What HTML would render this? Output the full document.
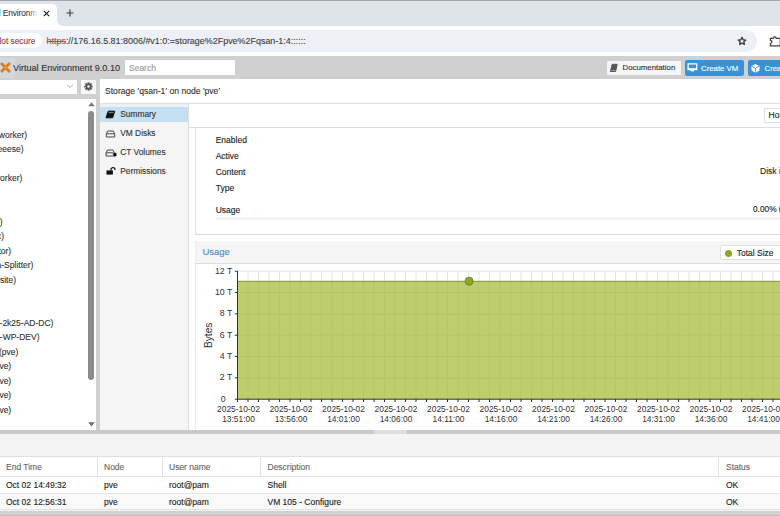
<!DOCTYPE html>
<html><head><meta charset="utf-8">
<style>
*{box-sizing:border-box;margin:0;padding:0}
html,body{-webkit-text-stroke:0.12px currentColor;width:780px;height:516px;overflow:hidden;background:#fff;font-family:"Liberation Sans",sans-serif;font-size:8.5px;color:#222;position:relative}
.a{position:absolute;white-space:nowrap}
.t{line-height:10px;height:10px}
</style></head><body>
<!-- browser chrome -->
<div class="a" style="left:0;top:0;width:780px;height:25.5px;background:#dfe3ea"></div>
<div class="a" style="left:0;top:0;width:780px;height:1px;background:#a4a8ae"></div>
<div class="a" style="left:0;top:4px;width:57px;height:23px;background:#fff;border-top-right-radius:5px"></div>
<div class="a t" style="left:-1.2px;top:8px;font-size:8.3px;color:#3c4043;line-height:10px;letter-spacing:-0.1px">l Environm</div>
<div class="a" style="left:28px;top:6px;width:12px;height:14px;background:linear-gradient(90deg,rgba(255,255,255,0),#fff 85%)"></div>
<svg class="a" style="left:43px;top:9.5px" width="7" height="7" viewBox="0 0 7 7"><path d="M0.8 0.8l5.4 5.4M6.2 0.8l-5.4 5.4" stroke="#202124" stroke-width="1.2"/></svg>
<svg class="a" style="left:66px;top:9px" width="8" height="8" viewBox="0 0 8 8"><path d="M4 0.5v7M0.5 4h7" stroke="#3c4043" stroke-width="1.2"/></svg>
<div class="a" style="left:0;top:25.5px;width:780px;height:31px;background:#fff"></div>
<div class="a" style="left:57px;top:20px;width:8px;height:6px;background:#fff"></div>
<div class="a" style="left:57px;top:13.5px;width:12px;height:12px;background:#dfe3ea;border-bottom-left-radius:6px"></div>

<div class="a" style="left:-20px;top:30px;width:777px;height:22px;background:#edf0f6;border-radius:11px"></div>
<div class="a" style="left:-20px;top:33.3px;width:61.5px;height:15px;background:#fff;border-radius:7.5px"></div>
<div class="a t" style="left:-0.5px;top:36px;font-size:8.3px;color:#9a4644;-webkit-text-stroke:0.15px #9a4644">lot secure</div>
<div class="a t" style="left:46.5px;top:36.3px;font-size:8.95px;color:#3c4043"><span style="color:#a8504c;text-decoration:line-through">https</span>://176.16.5.81:8006/#v1:0:=storage%2Fpve%2Fqsan-1:4::::::</div>
<svg class="a" style="left:736px;top:35px" width="12" height="12" viewBox="0 0 12 12"><path d="M6 2.3l1.15 2.45 2.65.3-1.95 1.8.55 2.6L6 8.15 3.6 9.45l.55-2.6L2.2 5.05l2.65-.3z" fill="none" stroke="#3c4043" stroke-width="1.35" stroke-linejoin="round"/></svg>
<svg class="a" style="left:769px;top:34px" width="14" height="14" viewBox="0 0 14 14"><path d="M1.4 4.3h2.9a1.4 1.4 0 0 1 2.8 0h4.2v7.6H1.4V9.3a1.5 1.5 0 0 0 0-3z" fill="none" stroke="#3c4043" stroke-width="1.3" stroke-linejoin="round"/></svg>

<!-- PVE background -->
<div class="a" style="left:0;top:56.4px;width:780px;height:460px;background:#d0d0d0"></div>
<!-- logo -->
<div class="a" style="left:0;top:58px;width:15px;height:20px;background:#d3d8de"></div>
<svg class="a" style="left:-1.1px;top:61.4px" width="14" height="13" viewBox="0 0 14 13"><path d="M2 2Q4.7 4.6 6.4 6.5Q4.7 8.4 2 11M11 2Q8.3 4.6 6.6 6.5Q8.3 8.4 11 11" fill="none" stroke="#e37a1e" stroke-width="2.8"/><circle cx="6.5" cy="6.5" r="1.2" fill="#f2a24e"/></svg>
<div class="a t" style="left:13px;top:63px;font-size:9.1px;color:#333">Virtual Environment 9.0.10</div>
<div class="a" style="left:124.5px;top:60px;width:110px;height:15.3px;background:#fff"></div>
<div class="a t" style="left:129px;top:63px;font-size:8.5px;color:#9a9a9a">Search</div>
<!-- header buttons -->
<div class="a" style="left:606.9px;top:61px;width:73.8px;height:13.8px;background:#f6f6f6;border-radius:1px"></div>
<svg class="a" style="left:609px;top:63px" width="10" height="10" viewBox="0 0 10 10"><path d="M3.2 1.3h5l-1.6 7.2H1.4z" fill="#555" stroke="#555" stroke-width="1" stroke-linejoin="round"/><path d="M1.9 7.6h4.6" stroke="#bbb" stroke-width=".7"/></svg>
<div class="a t" style="left:622.5px;top:63px;font-size:7.85px;color:#333">Documentation</div>
<div class="a" style="left:684.5px;top:60.1px;width:59.3px;height:15.6px;background:#3892d4;border-radius:2px"></div>
<svg class="a" style="left:687px;top:63px" width="11" height="10" viewBox="0 0 11 10"><path d="M1.1 0.9h8.6v5.6H1.1z" fill="none" stroke="#fff" stroke-width="1.3"/><path d="M1.1 6.1h8.6" stroke="#fff" stroke-width="1.7"/><rect x="3.6" y="6.8" width="3.4" height="1.6" fill="#fff"/></svg>
<div class="a t" style="left:701px;top:63.5px;font-size:7.8px;color:#fff">Create VM</div>
<div class="a" style="left:748px;top:60.1px;width:40px;height:15.6px;background:#3892d4;border-radius:2px"></div>
<svg class="a" style="left:750px;top:62.8px" width="11" height="11" viewBox="0 0 11 11"><path d="M5.5 1l4 2v4.6l-4 2.2-4-2.2V3z" fill="#fff"/><path d="M1.8 3.2l3.7 2 3.7-2M5.5 5.2v4.4" stroke="#3892d4" stroke-width=".8" fill="none"/></svg>
<div class="a t" style="left:764.5px;top:63.5px;font-size:7.8px;color:#fff">Create CT</div>

<!-- left panel -->
<div class="a" style="left:0;top:79.7px;width:77px;height:14.3px;background:#fff"></div>
<svg class="a" style="left:66px;top:83.3px" width="8" height="6" viewBox="0 0 8 6"><path d="M1 1.5l3 3 3-3" fill="none" stroke="#999" stroke-width=".9"/></svg>
<div class="a" style="left:81.3px;top:79.7px;width:14.7px;height:14.5px;background:#f8f8f8"></div>
<svg class="a" style="left:84.2px;top:82.2px" width="9" height="9" viewBox="0 0 10 10"><g fill="#555"><circle cx="5" cy="5" r="3.2"/><rect x="4" y="0.3" width="2" height="9.4"/><rect x="0.3" y="4" width="9.4" height="2"/><rect x="4" y="0.3" width="2" height="9.4" transform="rotate(45 5 5)"/><rect x="4" y="0.3" width="2" height="9.4" transform="rotate(-45 5 5)"/></g><circle cx="5" cy="5" r="1.3" fill="#f8f8f8"/></svg>
<div class="a" style="left:0;top:98.7px;width:96.3px;height:331.3px;background:#fff"></div>
<div class="a" style="left:88px;top:111px;width:5.9px;height:268.5px;background:#8c8c8c;border-radius:3px"></div>
<svg class="a" style="left:87.7px;top:102.2px" width="7" height="5" viewBox="0 0 7 5"><path d="M0.3 4.3h6.4L3.5 0.3z" fill="#777"/></svg>
<svg class="a" style="left:87.7px;top:422.2px" width="7" height="5" viewBox="0 0 7 5"><path d="M0.2 0.2h6.6L3.5 4.6z" fill="#6f6f6f"/></svg>
<div id="tree" style="font-size:8.5px;color:#333">
<div class="a t" style="right:752.8px;top:129.97px">worker)</div>
<div class="a t" style="right:756.5px;top:144.43px">eeese)</div>
<div class="a t" style="right:757.7px;top:173.35px">worker)</div>
<div class="a t" style="right:777.5px;top:216.74px">)</div>
<div class="a t" style="right:776px;top:231.20px">c)</div>
<div class="a t" style="right:768.8px;top:245.66px">tor)</div>
<div class="a t" style="right:746.6px;top:260.12px">a-Splitter)</div>
<div class="a t" style="right:764px;top:274.58px">site)</div>
<div class="a t" style="right:726.6px;top:317.96px">-2k25-AD-DC)</div>
<div class="a t" style="right:740.5px;top:332.42px">-WP-DEV)</div>
<div class="a t" style="right:761.7px;top:346.88px">(pve)</div>
<div class="a t" style="right:768.8px;top:361.35px">ve)</div>
<div class="a t" style="right:768.8px;top:375.81px">ve)</div>
<div class="a t" style="right:768.8px;top:390.27px">ve)</div>
<div class="a t" style="right:768.8px;top:404.73px">ve)</div>
</div>

<!-- content title -->
<div class="a" style="left:99.7px;top:79.2px;width:681px;height:24px;background:#fff"></div>
<div class="a t" style="left:105px;top:85.9px;font-size:8.6px;color:#333">Storage 'qsan-1' on node 'pve'</div>
<!-- nav -->
<div class="a" style="left:99.7px;top:103px;width:89.5px;height:327px;background:#f5f5f5;border-top:1px solid #e0e0e0;border-right:1px solid #dddddd"></div>
<div class="a" style="left:99.7px;top:104px;width:88.5px;height:2.5px;background:#eaf1f7"></div><div class="a" style="left:99.7px;top:106.5px;width:88.5px;height:15.2px;background:#c5dff3"></div>
<svg class="a" style="left:105px;top:110px" width="11" height="9" viewBox="0 0 11 9"><path d="M3.2 1.2h6.6l-2.2 6.6H1z" fill="#111" stroke="#111" stroke-width="1" stroke-linejoin="round"/><path d="M3.6 2.6h5" stroke="#c5dff3" stroke-width=".6"/></svg>
<div class="a t" style="left:120.2px;top:109.3px;font-size:8.4px;color:#333">Summary</div>
<svg class="a" style="left:105px;top:129.5px" width="11" height="8" viewBox="0 0 11 8"><path d="M1.3 3.8L2.8 1h5.4l1.5 2.8v3.2H1.3z M1.3 3.8h8.4" fill="none" stroke="#444" stroke-width="1"/></svg>
<div class="a t" style="left:120.2px;top:127.7px;font-size:8.4px;color:#333">VM Disks</div>
<svg class="a" style="left:105px;top:148.5px" width="12" height="9" viewBox="0 0 12 9"><path d="M1 3.8L2.5 1h5.4l1.5 2.8v3.2H1z M1 3.8h8.4" fill="none" stroke="#444" stroke-width="1"/><path d="M7.8 4.2l2-1 2 1v2.6l-2 1.2-2-1.2z" fill="#111" stroke="#f5f5f5" stroke-width=".5"/></svg>
<div class="a t" style="left:120.2px;top:147px;font-size:8.4px;color:#333">CT Volumes</div>
<svg class="a" style="left:105.5px;top:167px" width="10" height="8" viewBox="0 0 10 8"><rect x="0.5" y="3.4" width="6.4" height="4.2" fill="#111"/><path d="M5 3.6V2.6a2 2 0 0 1 4 0v.5" fill="none" stroke="#111" stroke-width="1.2"/></svg>
<div class="a t" style="left:120.2px;top:165.7px;font-size:8.4px;color:#333">Permissions</div>

<!-- main content -->
<div class="a" style="left:189px;top:103px;width:591px;height:327px;background:#fff;border-top:1px solid #e0e0e0"></div>
<div class="a" style="left:189px;top:127px;width:591px;height:1px;background:#dcdcdc"></div>
<div class="a" style="left:763.6px;top:107.6px;width:30px;height:15.1px;background:#fff;border:1px solid #e0e0e0"></div>
<div class="a t" style="left:768.6px;top:110px;font-size:8.5px;color:#222">Hour (average)</div>
<div class="a" style="left:195px;top:127px;width:600px;height:108px;border-left:1px solid #dfdfdf;border-bottom:1px solid #dcdcdc"></div>
<div class="a t" style="left:215.7px;top:135.2px;font-size:8.5px;color:#222">Enabled</div>
<div class="a t" style="left:215.7px;top:151.2px;font-size:8.5px;color:#222">Active</div>
<div class="a t" style="left:215.7px;top:167px;font-size:8.5px;color:#222">Content</div>
<div class="a t" style="left:215.7px;top:182.5px;font-size:8.5px;color:#222">Type</div>
<div class="a t" style="left:215.7px;top:205px;font-size:8.5px;color:#222">Usage</div>
<div class="a t" style="left:760px;top:166.2px;font-size:8.5px;color:#222">Disk image, ISO image</div>
<div class="a t" style="left:753px;top:204.3px;font-size:8.3px;color:#222">0.00% (0 B of 11 T)</div>
<div class="a" style="left:216px;top:216.7px;width:564px;height:3.1px;background:#f3f3f3"></div>

<!-- usage panel -->
<div class="a" style="left:195px;top:241px;width:600px;height:189px;border-left:1px solid #ececec"></div>
<div class="a" style="left:195.5px;top:241px;width:585px;height:23px;background:#f5f5f5;border-bottom:1px solid #dedede"></div>
<div class="a t" style="left:202.4px;top:247px;font-size:9.5px;color:#4a8ccb">Usage</div>
<div class="a" style="left:720.4px;top:245px;width:70px;height:15.4px;background:#fff;border:1px solid #e2e2e2;border-radius:2px"></div>
<div class="a" style="left:725.4px;top:249.9px;width:6.8px;height:6.8px;background:#8ca626;border-radius:50%"></div>
<div class="a t" style="left:736.7px;top:247.6px;font-size:8.5px;color:#222">Total Size</div>

<svg class="a" style="left:196px;top:264px" width="584" height="166" viewBox="196 264 584 166">
<defs>
<pattern id="vg" x="237.5" y="0" width="10.47" height="500" patternUnits="userSpaceOnUse"><rect x="0" y="0" width="0.8" height="500" fill="#000" /></pattern>
</defs>
<rect x="237.5" y="271.2" width="560" height="128" fill="#fff"/>
<rect x="237.5" y="281.3" width="560" height="117.9" fill="#bfce6c"/>
<g stroke="#e6e6e6" stroke-width="1">
</g>
<g id="grid"><line x1="248.00" y1="271.2" x2="248.00" y2="281" stroke="#e4e4e4" stroke-width="1"/><line x1="248.00" y1="281" x2="248.00" y2="399" stroke="#aebd5c" stroke-width="0.8" stroke-opacity="0.55"/><line x1="258.50" y1="271.2" x2="258.50" y2="281" stroke="#e4e4e4" stroke-width="1"/><line x1="258.50" y1="281" x2="258.50" y2="399" stroke="#aebd5c" stroke-width="0.8" stroke-opacity="0.55"/><line x1="269.00" y1="271.2" x2="269.00" y2="281" stroke="#e4e4e4" stroke-width="1"/><line x1="269.00" y1="281" x2="269.00" y2="399" stroke="#aebd5c" stroke-width="0.8" stroke-opacity="0.55"/><line x1="279.50" y1="271.2" x2="279.50" y2="281" stroke="#e4e4e4" stroke-width="1"/><line x1="279.50" y1="281" x2="279.50" y2="399" stroke="#aebd5c" stroke-width="0.8" stroke-opacity="0.55"/><line x1="290.00" y1="271.2" x2="290.00" y2="281" stroke="#e4e4e4" stroke-width="1"/><line x1="290.00" y1="281" x2="290.00" y2="399" stroke="#aebd5c" stroke-width="0.8" stroke-opacity="0.55"/><line x1="300.50" y1="271.2" x2="300.50" y2="281" stroke="#e4e4e4" stroke-width="1"/><line x1="300.50" y1="281" x2="300.50" y2="399" stroke="#aebd5c" stroke-width="0.8" stroke-opacity="0.55"/><line x1="311.00" y1="271.2" x2="311.00" y2="281" stroke="#e4e4e4" stroke-width="1"/><line x1="311.00" y1="281" x2="311.00" y2="399" stroke="#aebd5c" stroke-width="0.8" stroke-opacity="0.55"/><line x1="321.50" y1="271.2" x2="321.50" y2="281" stroke="#e4e4e4" stroke-width="1"/><line x1="321.50" y1="281" x2="321.50" y2="399" stroke="#aebd5c" stroke-width="0.8" stroke-opacity="0.55"/><line x1="332.00" y1="271.2" x2="332.00" y2="281" stroke="#e4e4e4" stroke-width="1"/><line x1="332.00" y1="281" x2="332.00" y2="399" stroke="#aebd5c" stroke-width="0.8" stroke-opacity="0.55"/><line x1="342.50" y1="271.2" x2="342.50" y2="281" stroke="#e4e4e4" stroke-width="1"/><line x1="342.50" y1="281" x2="342.50" y2="399" stroke="#aebd5c" stroke-width="0.8" stroke-opacity="0.55"/><line x1="353.00" y1="271.2" x2="353.00" y2="281" stroke="#e4e4e4" stroke-width="1"/><line x1="353.00" y1="281" x2="353.00" y2="399" stroke="#aebd5c" stroke-width="0.8" stroke-opacity="0.55"/><line x1="363.50" y1="271.2" x2="363.50" y2="281" stroke="#e4e4e4" stroke-width="1"/><line x1="363.50" y1="281" x2="363.50" y2="399" stroke="#aebd5c" stroke-width="0.8" stroke-opacity="0.55"/><line x1="374.00" y1="271.2" x2="374.00" y2="281" stroke="#e4e4e4" stroke-width="1"/><line x1="374.00" y1="281" x2="374.00" y2="399" stroke="#aebd5c" stroke-width="0.8" stroke-opacity="0.55"/><line x1="384.50" y1="271.2" x2="384.50" y2="281" stroke="#e4e4e4" stroke-width="1"/><line x1="384.50" y1="281" x2="384.50" y2="399" stroke="#aebd5c" stroke-width="0.8" stroke-opacity="0.55"/><line x1="395.00" y1="271.2" x2="395.00" y2="281" stroke="#e4e4e4" stroke-width="1"/><line x1="395.00" y1="281" x2="395.00" y2="399" stroke="#aebd5c" stroke-width="0.8" stroke-opacity="0.55"/><line x1="405.50" y1="271.2" x2="405.50" y2="281" stroke="#e4e4e4" stroke-width="1"/><line x1="405.50" y1="281" x2="405.50" y2="399" stroke="#aebd5c" stroke-width="0.8" stroke-opacity="0.55"/><line x1="416.00" y1="271.2" x2="416.00" y2="281" stroke="#e4e4e4" stroke-width="1"/><line x1="416.00" y1="281" x2="416.00" y2="399" stroke="#aebd5c" stroke-width="0.8" stroke-opacity="0.55"/><line x1="426.50" y1="271.2" x2="426.50" y2="281" stroke="#e4e4e4" stroke-width="1"/><line x1="426.50" y1="281" x2="426.50" y2="399" stroke="#aebd5c" stroke-width="0.8" stroke-opacity="0.55"/><line x1="437.00" y1="271.2" x2="437.00" y2="281" stroke="#e4e4e4" stroke-width="1"/><line x1="437.00" y1="281" x2="437.00" y2="399" stroke="#aebd5c" stroke-width="0.8" stroke-opacity="0.55"/><line x1="447.50" y1="271.2" x2="447.50" y2="281" stroke="#e4e4e4" stroke-width="1"/><line x1="447.50" y1="281" x2="447.50" y2="399" stroke="#aebd5c" stroke-width="0.8" stroke-opacity="0.55"/><line x1="458.00" y1="271.2" x2="458.00" y2="281" stroke="#e4e4e4" stroke-width="1"/><line x1="458.00" y1="281" x2="458.00" y2="399" stroke="#aebd5c" stroke-width="0.8" stroke-opacity="0.55"/><line x1="468.50" y1="271.2" x2="468.50" y2="281" stroke="#e4e4e4" stroke-width="1"/><line x1="468.50" y1="281" x2="468.50" y2="399" stroke="#aebd5c" stroke-width="0.8" stroke-opacity="0.55"/><line x1="479.00" y1="271.2" x2="479.00" y2="281" stroke="#e4e4e4" stroke-width="1"/><line x1="479.00" y1="281" x2="479.00" y2="399" stroke="#aebd5c" stroke-width="0.8" stroke-opacity="0.55"/><line x1="489.50" y1="271.2" x2="489.50" y2="281" stroke="#e4e4e4" stroke-width="1"/><line x1="489.50" y1="281" x2="489.50" y2="399" stroke="#aebd5c" stroke-width="0.8" stroke-opacity="0.55"/><line x1="500.00" y1="271.2" x2="500.00" y2="281" stroke="#e4e4e4" stroke-width="1"/><line x1="500.00" y1="281" x2="500.00" y2="399" stroke="#aebd5c" stroke-width="0.8" stroke-opacity="0.55"/><line x1="510.50" y1="271.2" x2="510.50" y2="281" stroke="#e4e4e4" stroke-width="1"/><line x1="510.50" y1="281" x2="510.50" y2="399" stroke="#aebd5c" stroke-width="0.8" stroke-opacity="0.55"/><line x1="521.00" y1="271.2" x2="521.00" y2="281" stroke="#e4e4e4" stroke-width="1"/><line x1="521.00" y1="281" x2="521.00" y2="399" stroke="#aebd5c" stroke-width="0.8" stroke-opacity="0.55"/><line x1="531.50" y1="271.2" x2="531.50" y2="281" stroke="#e4e4e4" stroke-width="1"/><line x1="531.50" y1="281" x2="531.50" y2="399" stroke="#aebd5c" stroke-width="0.8" stroke-opacity="0.55"/><line x1="542.00" y1="271.2" x2="542.00" y2="281" stroke="#e4e4e4" stroke-width="1"/><line x1="542.00" y1="281" x2="542.00" y2="399" stroke="#aebd5c" stroke-width="0.8" stroke-opacity="0.55"/><line x1="552.50" y1="271.2" x2="552.50" y2="281" stroke="#e4e4e4" stroke-width="1"/><line x1="552.50" y1="281" x2="552.50" y2="399" stroke="#aebd5c" stroke-width="0.8" stroke-opacity="0.55"/><line x1="563.00" y1="271.2" x2="563.00" y2="281" stroke="#e4e4e4" stroke-width="1"/><line x1="563.00" y1="281" x2="563.00" y2="399" stroke="#aebd5c" stroke-width="0.8" stroke-opacity="0.55"/><line x1="573.50" y1="271.2" x2="573.50" y2="281" stroke="#e4e4e4" stroke-width="1"/><line x1="573.50" y1="281" x2="573.50" y2="399" stroke="#aebd5c" stroke-width="0.8" stroke-opacity="0.55"/><line x1="584.00" y1="271.2" x2="584.00" y2="281" stroke="#e4e4e4" stroke-width="1"/><line x1="584.00" y1="281" x2="584.00" y2="399" stroke="#aebd5c" stroke-width="0.8" stroke-opacity="0.55"/><line x1="594.50" y1="271.2" x2="594.50" y2="281" stroke="#e4e4e4" stroke-width="1"/><line x1="594.50" y1="281" x2="594.50" y2="399" stroke="#aebd5c" stroke-width="0.8" stroke-opacity="0.55"/><line x1="605.00" y1="271.2" x2="605.00" y2="281" stroke="#e4e4e4" stroke-width="1"/><line x1="605.00" y1="281" x2="605.00" y2="399" stroke="#aebd5c" stroke-width="0.8" stroke-opacity="0.55"/><line x1="615.50" y1="271.2" x2="615.50" y2="281" stroke="#e4e4e4" stroke-width="1"/><line x1="615.50" y1="281" x2="615.50" y2="399" stroke="#aebd5c" stroke-width="0.8" stroke-opacity="0.55"/><line x1="626.00" y1="271.2" x2="626.00" y2="281" stroke="#e4e4e4" stroke-width="1"/><line x1="626.00" y1="281" x2="626.00" y2="399" stroke="#aebd5c" stroke-width="0.8" stroke-opacity="0.55"/><line x1="636.50" y1="271.2" x2="636.50" y2="281" stroke="#e4e4e4" stroke-width="1"/><line x1="636.50" y1="281" x2="636.50" y2="399" stroke="#aebd5c" stroke-width="0.8" stroke-opacity="0.55"/><line x1="647.00" y1="271.2" x2="647.00" y2="281" stroke="#e4e4e4" stroke-width="1"/><line x1="647.00" y1="281" x2="647.00" y2="399" stroke="#aebd5c" stroke-width="0.8" stroke-opacity="0.55"/><line x1="657.50" y1="271.2" x2="657.50" y2="281" stroke="#e4e4e4" stroke-width="1"/><line x1="657.50" y1="281" x2="657.50" y2="399" stroke="#aebd5c" stroke-width="0.8" stroke-opacity="0.55"/><line x1="668.00" y1="271.2" x2="668.00" y2="281" stroke="#e4e4e4" stroke-width="1"/><line x1="668.00" y1="281" x2="668.00" y2="399" stroke="#aebd5c" stroke-width="0.8" stroke-opacity="0.55"/><line x1="678.50" y1="271.2" x2="678.50" y2="281" stroke="#e4e4e4" stroke-width="1"/><line x1="678.50" y1="281" x2="678.50" y2="399" stroke="#aebd5c" stroke-width="0.8" stroke-opacity="0.55"/><line x1="689.00" y1="271.2" x2="689.00" y2="281" stroke="#e4e4e4" stroke-width="1"/><line x1="689.00" y1="281" x2="689.00" y2="399" stroke="#aebd5c" stroke-width="0.8" stroke-opacity="0.55"/><line x1="699.50" y1="271.2" x2="699.50" y2="281" stroke="#e4e4e4" stroke-width="1"/><line x1="699.50" y1="281" x2="699.50" y2="399" stroke="#aebd5c" stroke-width="0.8" stroke-opacity="0.55"/><line x1="710.00" y1="271.2" x2="710.00" y2="281" stroke="#e4e4e4" stroke-width="1"/><line x1="710.00" y1="281" x2="710.00" y2="399" stroke="#aebd5c" stroke-width="0.8" stroke-opacity="0.55"/><line x1="720.50" y1="271.2" x2="720.50" y2="281" stroke="#e4e4e4" stroke-width="1"/><line x1="720.50" y1="281" x2="720.50" y2="399" stroke="#aebd5c" stroke-width="0.8" stroke-opacity="0.55"/><line x1="731.00" y1="271.2" x2="731.00" y2="281" stroke="#e4e4e4" stroke-width="1"/><line x1="731.00" y1="281" x2="731.00" y2="399" stroke="#aebd5c" stroke-width="0.8" stroke-opacity="0.55"/><line x1="741.50" y1="271.2" x2="741.50" y2="281" stroke="#e4e4e4" stroke-width="1"/><line x1="741.50" y1="281" x2="741.50" y2="399" stroke="#aebd5c" stroke-width="0.8" stroke-opacity="0.55"/><line x1="752.00" y1="271.2" x2="752.00" y2="281" stroke="#e4e4e4" stroke-width="1"/><line x1="752.00" y1="281" x2="752.00" y2="399" stroke="#aebd5c" stroke-width="0.8" stroke-opacity="0.55"/><line x1="762.50" y1="271.2" x2="762.50" y2="281" stroke="#e4e4e4" stroke-width="1"/><line x1="762.50" y1="281" x2="762.50" y2="399" stroke="#aebd5c" stroke-width="0.8" stroke-opacity="0.55"/><line x1="773.00" y1="271.2" x2="773.00" y2="281" stroke="#e4e4e4" stroke-width="1"/><line x1="773.00" y1="281" x2="773.00" y2="399" stroke="#aebd5c" stroke-width="0.8" stroke-opacity="0.55"/><line x1="783.50" y1="271.2" x2="783.50" y2="281" stroke="#e4e4e4" stroke-width="1"/><line x1="783.50" y1="281" x2="783.50" y2="399" stroke="#aebd5c" stroke-width="0.8" stroke-opacity="0.55"/><line x1="794.00" y1="271.2" x2="794.00" y2="281" stroke="#e4e4e4" stroke-width="1"/><line x1="794.00" y1="281" x2="794.00" y2="399" stroke="#aebd5c" stroke-width="0.8" stroke-opacity="0.55"/><line x1="804.50" y1="271.2" x2="804.50" y2="281" stroke="#e4e4e4" stroke-width="1"/><line x1="804.50" y1="281" x2="804.50" y2="399" stroke="#aebd5c" stroke-width="0.8" stroke-opacity="0.55"/><line x1="237.5" y1="377.87" x2="790" y2="377.87" stroke="#aebd5c" stroke-width="0.8" stroke-opacity="0.55"/><line x1="237.5" y1="356.53" x2="790" y2="356.53" stroke="#aebd5c" stroke-width="0.8" stroke-opacity="0.55"/><line x1="237.5" y1="335.20" x2="790" y2="335.20" stroke="#aebd5c" stroke-width="0.8" stroke-opacity="0.55"/><line x1="237.5" y1="313.87" x2="790" y2="313.87" stroke="#aebd5c" stroke-width="0.8" stroke-opacity="0.55"/><line x1="237.5" y1="292.53" x2="790" y2="292.53" stroke="#aebd5c" stroke-width="0.8" stroke-opacity="0.55"/><line x1="237.5" y1="271.20" x2="790" y2="271.20" stroke="#e4e4e4" stroke-width="1"/></g>
<path d="M237.5 281.3H790" stroke="#7f9832" stroke-width="1"/>
<circle cx="469.1" cy="281.2" r="4" fill="#8ea826" stroke="#6b831a" stroke-width=".9"/>
<path d="M237.5 271V399.2H790" fill="none" stroke="#333" stroke-width="1"/>
<g id="ticks"><line x1="237.50" y1="399" x2="237.50" y2="402" stroke="#333" stroke-width="1"/><line x1="248.00" y1="399" x2="248.00" y2="402" stroke="#333" stroke-width="1"/><line x1="258.50" y1="399" x2="258.50" y2="402" stroke="#333" stroke-width="1"/><line x1="269.00" y1="399" x2="269.00" y2="402" stroke="#333" stroke-width="1"/><line x1="279.50" y1="399" x2="279.50" y2="402" stroke="#333" stroke-width="1"/><line x1="290.00" y1="399" x2="290.00" y2="402" stroke="#333" stroke-width="1"/><line x1="300.50" y1="399" x2="300.50" y2="402" stroke="#333" stroke-width="1"/><line x1="311.00" y1="399" x2="311.00" y2="402" stroke="#333" stroke-width="1"/><line x1="321.50" y1="399" x2="321.50" y2="402" stroke="#333" stroke-width="1"/><line x1="332.00" y1="399" x2="332.00" y2="402" stroke="#333" stroke-width="1"/><line x1="342.50" y1="399" x2="342.50" y2="402" stroke="#333" stroke-width="1"/><line x1="353.00" y1="399" x2="353.00" y2="402" stroke="#333" stroke-width="1"/><line x1="363.50" y1="399" x2="363.50" y2="402" stroke="#333" stroke-width="1"/><line x1="374.00" y1="399" x2="374.00" y2="402" stroke="#333" stroke-width="1"/><line x1="384.50" y1="399" x2="384.50" y2="402" stroke="#333" stroke-width="1"/><line x1="395.00" y1="399" x2="395.00" y2="402" stroke="#333" stroke-width="1"/><line x1="405.50" y1="399" x2="405.50" y2="402" stroke="#333" stroke-width="1"/><line x1="416.00" y1="399" x2="416.00" y2="402" stroke="#333" stroke-width="1"/><line x1="426.50" y1="399" x2="426.50" y2="402" stroke="#333" stroke-width="1"/><line x1="437.00" y1="399" x2="437.00" y2="402" stroke="#333" stroke-width="1"/><line x1="447.50" y1="399" x2="447.50" y2="402" stroke="#333" stroke-width="1"/><line x1="458.00" y1="399" x2="458.00" y2="402" stroke="#333" stroke-width="1"/><line x1="468.50" y1="399" x2="468.50" y2="402" stroke="#333" stroke-width="1"/><line x1="479.00" y1="399" x2="479.00" y2="402" stroke="#333" stroke-width="1"/><line x1="489.50" y1="399" x2="489.50" y2="402" stroke="#333" stroke-width="1"/><line x1="500.00" y1="399" x2="500.00" y2="402" stroke="#333" stroke-width="1"/><line x1="510.50" y1="399" x2="510.50" y2="402" stroke="#333" stroke-width="1"/><line x1="521.00" y1="399" x2="521.00" y2="402" stroke="#333" stroke-width="1"/><line x1="531.50" y1="399" x2="531.50" y2="402" stroke="#333" stroke-width="1"/><line x1="542.00" y1="399" x2="542.00" y2="402" stroke="#333" stroke-width="1"/><line x1="552.50" y1="399" x2="552.50" y2="402" stroke="#333" stroke-width="1"/><line x1="563.00" y1="399" x2="563.00" y2="402" stroke="#333" stroke-width="1"/><line x1="573.50" y1="399" x2="573.50" y2="402" stroke="#333" stroke-width="1"/><line x1="584.00" y1="399" x2="584.00" y2="402" stroke="#333" stroke-width="1"/><line x1="594.50" y1="399" x2="594.50" y2="402" stroke="#333" stroke-width="1"/><line x1="605.00" y1="399" x2="605.00" y2="402" stroke="#333" stroke-width="1"/><line x1="615.50" y1="399" x2="615.50" y2="402" stroke="#333" stroke-width="1"/><line x1="626.00" y1="399" x2="626.00" y2="402" stroke="#333" stroke-width="1"/><line x1="636.50" y1="399" x2="636.50" y2="402" stroke="#333" stroke-width="1"/><line x1="647.00" y1="399" x2="647.00" y2="402" stroke="#333" stroke-width="1"/><line x1="657.50" y1="399" x2="657.50" y2="402" stroke="#333" stroke-width="1"/><line x1="668.00" y1="399" x2="668.00" y2="402" stroke="#333" stroke-width="1"/><line x1="678.50" y1="399" x2="678.50" y2="402" stroke="#333" stroke-width="1"/><line x1="689.00" y1="399" x2="689.00" y2="402" stroke="#333" stroke-width="1"/><line x1="699.50" y1="399" x2="699.50" y2="402" stroke="#333" stroke-width="1"/><line x1="710.00" y1="399" x2="710.00" y2="402" stroke="#333" stroke-width="1"/><line x1="720.50" y1="399" x2="720.50" y2="402" stroke="#333" stroke-width="1"/><line x1="731.00" y1="399" x2="731.00" y2="402" stroke="#333" stroke-width="1"/><line x1="741.50" y1="399" x2="741.50" y2="402" stroke="#333" stroke-width="1"/><line x1="752.00" y1="399" x2="752.00" y2="402" stroke="#333" stroke-width="1"/><line x1="762.50" y1="399" x2="762.50" y2="402" stroke="#333" stroke-width="1"/><line x1="773.00" y1="399" x2="773.00" y2="402" stroke="#333" stroke-width="1"/><line x1="783.50" y1="399" x2="783.50" y2="402" stroke="#333" stroke-width="1"/><line x1="794.00" y1="399" x2="794.00" y2="402" stroke="#333" stroke-width="1"/><line x1="804.50" y1="399" x2="804.50" y2="402" stroke="#333" stroke-width="1"/><line x1="234.8" y1="399.20" x2="237.5" y2="399.20" stroke="#333" stroke-width="1"/><line x1="234.8" y1="377.87" x2="237.5" y2="377.87" stroke="#333" stroke-width="1"/><line x1="234.8" y1="356.53" x2="237.5" y2="356.53" stroke="#333" stroke-width="1"/><line x1="234.8" y1="335.20" x2="237.5" y2="335.20" stroke="#333" stroke-width="1"/><line x1="234.8" y1="313.87" x2="237.5" y2="313.87" stroke="#333" stroke-width="1"/><line x1="234.8" y1="292.53" x2="237.5" y2="292.53" stroke="#333" stroke-width="1"/><line x1="234.8" y1="271.20" x2="237.5" y2="271.20" stroke="#333" stroke-width="1"/></g>
<g id="labels" font-family="Liberation Sans" font-size="8.4" fill="#333"><text x="225.6" y="401.70" text-anchor="end" font-size="8.8">0</text><text x="232.4" y="380.37" text-anchor="end" font-size="8.8">2 T</text><text x="232.4" y="359.03" text-anchor="end" font-size="8.8">4 T</text><text x="232.4" y="337.70" text-anchor="end" font-size="8.8">6 T</text><text x="232.4" y="316.37" text-anchor="end" font-size="8.8">8 T</text><text x="232.4" y="295.03" text-anchor="end" font-size="8.8">10 T</text><text x="232.4" y="273.70" text-anchor="end" font-size="8.8">12 T</text><text x="238.50" y="412" text-anchor="middle">2025-10-02</text><text x="238.50" y="421.8" text-anchor="middle">13:51:00</text><text x="291.00" y="412" text-anchor="middle">2025-10-02</text><text x="291.00" y="421.8" text-anchor="middle">13:56:00</text><text x="343.50" y="412" text-anchor="middle">2025-10-02</text><text x="343.50" y="421.8" text-anchor="middle">14:01:00</text><text x="396.00" y="412" text-anchor="middle">2025-10-02</text><text x="396.00" y="421.8" text-anchor="middle">14:06:00</text><text x="448.50" y="412" text-anchor="middle">2025-10-02</text><text x="448.50" y="421.8" text-anchor="middle">14:11:00</text><text x="501.00" y="412" text-anchor="middle">2025-10-02</text><text x="501.00" y="421.8" text-anchor="middle">14:16:00</text><text x="553.50" y="412" text-anchor="middle">2025-10-02</text><text x="553.50" y="421.8" text-anchor="middle">14:21:00</text><text x="606.00" y="412" text-anchor="middle">2025-10-02</text><text x="606.00" y="421.8" text-anchor="middle">14:26:00</text><text x="658.50" y="412" text-anchor="middle">2025-10-02</text><text x="658.50" y="421.8" text-anchor="middle">14:31:00</text><text x="711.00" y="412" text-anchor="middle">2025-10-02</text><text x="711.00" y="421.8" text-anchor="middle">14:36:00</text><text x="763.50" y="412" text-anchor="middle">2025-10-02</text><text x="763.50" y="421.8" text-anchor="middle">14:41:00</text><text x="0" y="0" text-anchor="middle" transform="translate(212 335.3) rotate(-90)" font-size="10.2">Bytes</text></g>
</svg>

<!-- bottom -->
<div class="a" style="left:0;top:429.8px;width:780px;height:4px;background:#c9c9c9"></div>
<div class="a" style="left:374px;top:429.8px;width:32.5px;height:4px;background:#dedede"></div>
<div class="a" style="left:0;top:433.8px;width:780px;height:22.2px;background:#f4f4f4"></div>
<div class="a" style="left:0;top:456px;width:780px;height:54px;background:#fff"></div>
<div class="a" style="left:0;top:456px;width:780px;height:1px;background:#e0e0e0"></div>
<div class="a" style="left:0;top:476px;width:780px;height:1px;background:#e0e0e0"></div>
<div class="a" style="left:0;top:493px;width:780px;height:1px;background:#e6e6e6"></div>
<div class="a" style="left:0;top:494px;width:780px;height:15px;background:#f9f9f9"></div>
<div class="a" style="left:97px;top:457px;width:1px;height:19px;background:#e2e2e2"></div>
<div class="a" style="left:162px;top:457px;width:1px;height:19px;background:#e2e2e2"></div>
<div class="a" style="left:260px;top:457px;width:1px;height:19px;background:#e2e2e2"></div>
<div class="a" style="left:718px;top:457px;width:1px;height:19px;background:#e2e2e2"></div>
<div class="a t" style="left:6px;top:461.9px;color:#666">End Time</div>
<div class="a t" style="left:104px;top:461.9px;color:#666">Node</div>
<div class="a t" style="left:169px;top:461.9px;color:#666">User name</div>
<div class="a t" style="left:267.5px;top:461.9px;color:#666">Description</div>
<div class="a t" style="left:726px;top:461.9px;color:#666">Status</div>
<div class="a t" style="left:6px;top:480.4px">Oct 02 14:49:32</div>
<div class="a t" style="left:104px;top:480.4px">pve</div>
<div class="a t" style="left:169px;top:480.4px">root@pam</div>
<div class="a t" style="left:267.5px;top:480.4px">Shell</div>
<div class="a t" style="left:726px;top:480.4px">OK</div>
<div class="a t" style="left:6px;top:496.5px">Oct 02 12:56:31</div>
<div class="a t" style="left:104px;top:496.5px">pve</div>
<div class="a t" style="left:169px;top:496.5px">root@pam</div>
<div class="a t" style="left:267.5px;top:496.5px">VM 105 - Configure</div>
<div class="a t" style="left:726px;top:496.5px">OK</div>
<div class="a" style="left:0;top:509px;width:780px;height:0.8px;background:#e2e2e2"></div><div class="a" style="left:0;top:509.8px;width:780px;height:1.6px;background:#f3f3f3"></div><div class="a" style="left:0;top:511.4px;width:780px;height:3.7px;background:#d0d0d0"></div><div class="a" style="left:0;top:515.1px;width:780px;height:0.9px;background:#b9b9b9"></div>


</body></html>
